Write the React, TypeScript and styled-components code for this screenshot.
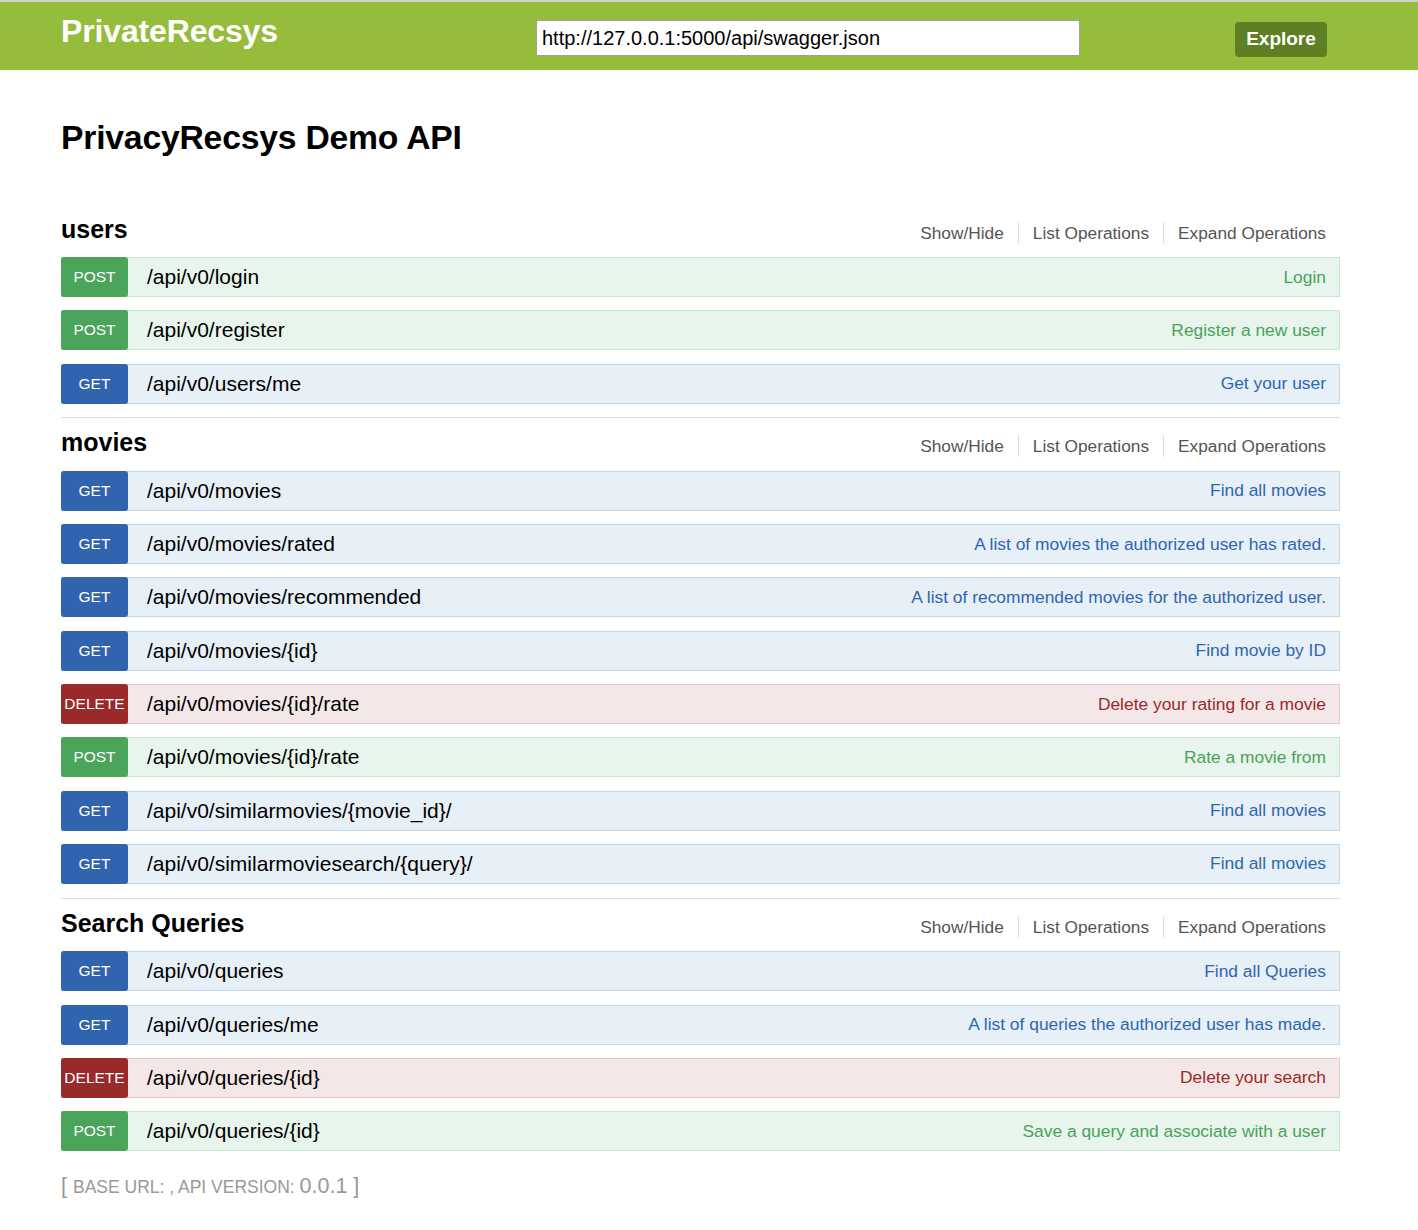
import React from "react";
import styled, { createGlobalStyle } from "styled-components";

const Global = createGlobalStyle`
  html, body { margin: 0; padding: 0; background: #fff; }
  body { font-family: "Liberation Sans", Arial, Helvetica, sans-serif; color: #000; }
`;

type Method = "GET" | "POST" | "DELETE";

const palette: Record<Method, { badge: string; bg: string; border: string; text: string }> = {
  GET: { badge: "#3164ae", bg: "#e7eff7", border: "#c4d7ea", text: "#2f66b0" },
  POST: { badge: "#4aa55a", bg: "#e8f5ec", border: "#c5e6d0", text: "#48a35a" },
  DELETE: { badge: "#9a2a2a", bg: "#f4e7e8", border: "#e6c6c7", text: "#9b2a2a" },
};

const Header = styled.header`
  border-top: 2px solid #d0d0d0;
  background: #95bd3b;
  height: 68px;
  display: flex;
  align-items: center;
  padding: 0 91px 0 61px;
`;

const Logo = styled.div`
  color: #fff;
  font-weight: bold;
  font-size: 32px;
  letter-spacing: -0.15px;
  margin-top: -9px;
  flex: 0 0 475px;
`;

const UrlInput = styled.input`
  width: 544px;
  height: 36px;
  box-sizing: border-box;
  border: 1px solid #a0a0a0;
  border-radius: 2px;
  font-family: "Liberation Sans", Arial, sans-serif;
  font-size: 20px;
  padding: 0 5px;
  margin-top: 4px;
  color: #000;
  outline: none;
`;

const Spacer = styled.div`
  flex: 1;
`;

const ExploreButton = styled.button`
  width: 92px;
  height: 35px;
  border: none;
  border-radius: 4px;
  background: #5e7f24;
  color: #fff;
  font-family: "Liberation Sans", Arial, sans-serif;
  font-weight: bold;
  font-size: 19px;
  margin-top: 6px;
  padding: 0;
`;

const Main = styled.main`
  width: 1279px;
  margin-left: 61px;
  padding-top: 49px;
`;

const Title = styled.h1`
  margin: 0 0 59px;
  font-size: 33.7px;
  line-height: 36px;
  font-weight: bold;
  letter-spacing: -0.2px;
`;

const Section = styled.section<{ $last?: boolean }>`
  border-bottom: ${(p) => (p.$last ? "none" : "1px solid #ddd")};
  padding-bottom: ${(p) => (p.$last ? "0" : "0.5px")};
  margin-bottom: 9.5px;
`;

const SectionHead = styled.div`
  display: flex;
  align-items: center;
  height: 30px;
  margin-bottom: 13px;
`;

const SectionName = styled.h2`
  margin: 0;
  font-size: 25px;
  font-weight: bold;
  flex: 1;
`;

const Links = styled.ul`
  list-style: none;
  margin: 7px 0 0;
  padding: 0;
  display: flex;
  align-items: center;
`;

const LinkItem = styled.li<{ $first?: boolean }>`
  padding: 0 14px;
  font-size: 17.3px;
  color: #555;
  line-height: 22px;
  border-left: ${(p) => (p.$first ? "none" : "1px solid #ddd")};
`;

const Row = styled.div<{ $m: Method }>`
  display: flex;
  align-items: center;
  height: 40px;
  box-sizing: border-box;
  background: ${(p) => palette[p.$m].bg};
  border: 1px solid ${(p) => palette[p.$m].border};
  margin-bottom: 13.3px;
`;

const Badge = styled.span<{ $m: Method }>`
  display: flex;
  align-items: center;
  justify-content: center;
  width: 67px;
  height: 40px;
  margin: -1px 0 -1px -1px;
  border-radius: 3px;
  background: ${(p) => palette[p.$m].badge};
  color: #fff;
  font-size: 15.5px;
  flex: 0 0 auto;
`;

const Path = styled.span`
  margin-left: 19px;
  font-size: 21px;
  flex: 1;
`;

const Desc = styled.span<{ $m: Method }>`
  font-size: 17.4px;
  color: ${(p) => palette[p.$m].text};
  margin-right: 13px;
`;

const Footer = styled.div`
  color: #999;
  font-size: 21.5px;
  margin-top: 23px;
  padding-bottom: 30px;
`;

const Small = styled.span`
  font-size: 17.5px;
`;

type Op = [Method, string, string];

const sections: { name: string; ops: Op[] }[] = [
  {
    name: "users",
    ops: [
      ["POST", "/api/v0/login", "Login"],
      ["POST", "/api/v0/register", "Register a new user"],
      ["GET", "/api/v0/users/me", "Get your user"],
    ],
  },
  {
    name: "movies",
    ops: [
      ["GET", "/api/v0/movies", "Find all movies"],
      ["GET", "/api/v0/movies/rated", "A list of movies the authorized user has rated."],
      ["GET", "/api/v0/movies/recommended", "A list of recommended movies for the authorized user."],
      ["GET", "/api/v0/movies/{id}", "Find movie by ID"],
      ["DELETE", "/api/v0/movies/{id}/rate", "Delete your rating for a movie"],
      ["POST", "/api/v0/movies/{id}/rate", "Rate a movie from"],
      ["GET", "/api/v0/similarmovies/{movie_id}/", "Find all movies"],
      ["GET", "/api/v0/similarmoviesearch/{query}/", "Find all movies"],
    ],
  },
  {
    name: "Search Queries",
    ops: [
      ["GET", "/api/v0/queries", "Find all Queries"],
      ["GET", "/api/v0/queries/me", "A list of queries the authorized user has made."],
      ["DELETE", "/api/v0/queries/{id}", "Delete your search"],
      ["POST", "/api/v0/queries/{id}", "Save a query and associate with a user"],
    ],
  },
];

export default function App() {
  return (
    <>
      <Global />
      <Header>
        <Logo>PrivateRecsys</Logo>
        <UrlInput defaultValue="http://127.0.0.1:5000/api/swagger.json" />
        <Spacer />
        <ExploreButton>Explore</ExploreButton>
      </Header>
      <Main>
        <Title>PrivacyRecsys Demo API</Title>
        {sections.map((s, i) => (
          <Section key={s.name} $last={i === sections.length - 1}>
            <SectionHead>
              <SectionName>{s.name}</SectionName>
              <Links>
                <LinkItem $first>Show/Hide</LinkItem>
                <LinkItem>List Operations</LinkItem>
                <LinkItem>Expand Operations</LinkItem>
              </Links>
            </SectionHead>
            {s.ops.map(([m, path, desc]) => (
              <Row key={m + path} $m={m}>
                <Badge $m={m}>{m}</Badge>
                <Path>{path}</Path>
                <Desc $m={m}>{desc}</Desc>
              </Row>
            ))}
          </Section>
        ))}
        <Footer>
          [ <Small>BASE URL: , API VERSION: </Small>0.0.1 ]
        </Footer>
      </Main>
    </>
  );
}
